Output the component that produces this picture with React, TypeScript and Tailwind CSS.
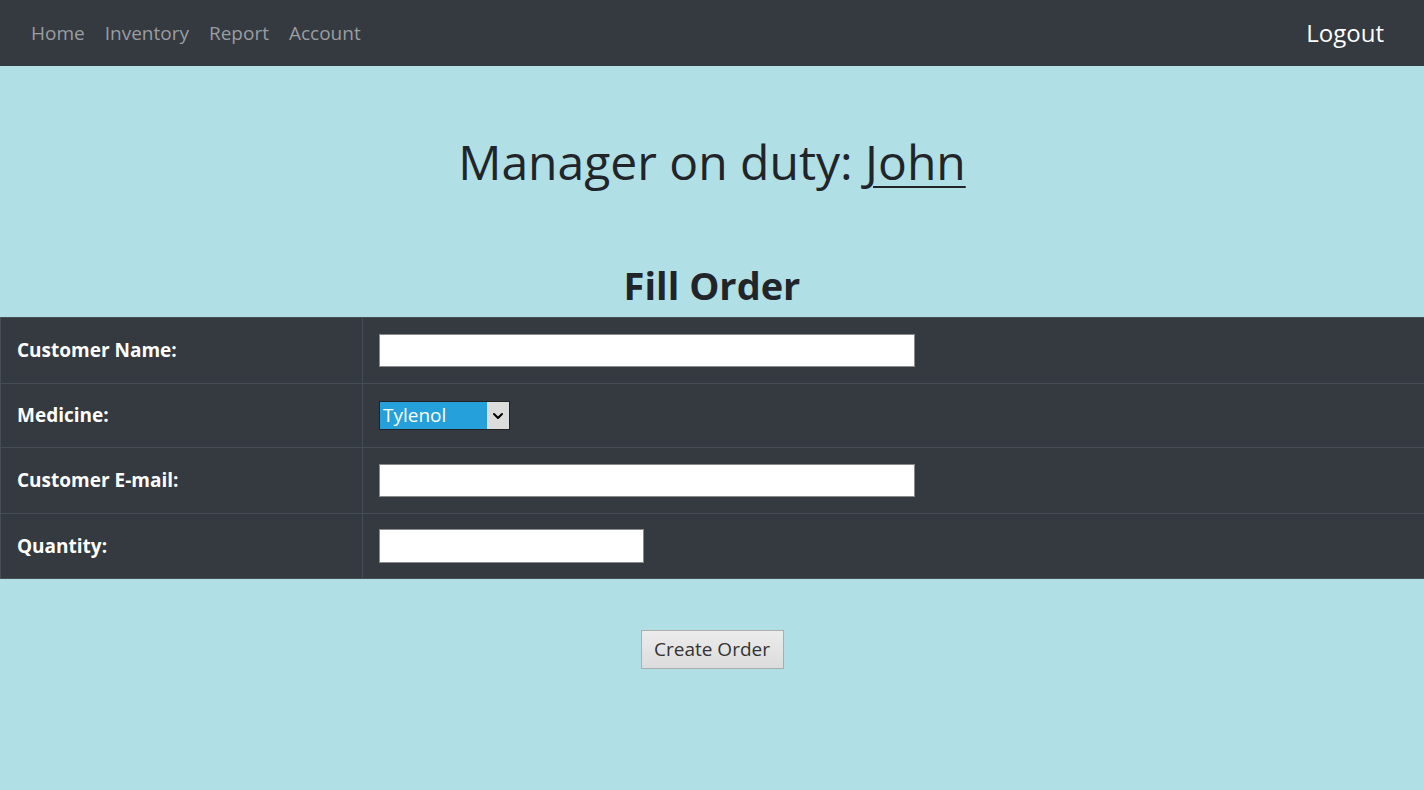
import { HiChevronDown } from "react-icons/hi";

const font = { fontFamily: '"Open Sans", "Noto Sans", sans-serif' };

const navLinks = ["Home", "Inventory", "Report", "Account"];

const Row = ({ label, h, children }: { label: string; h: string; children: React.ReactNode }) => (
  <div className={`grid grid-cols-[362px_1fr] border-t border-[#454d55] ${h}`}>
    <div className="flex items-center border-r border-[#454d55] pl-[16px] text-[19px] font-bold text-white">{label}</div>
    <div className="flex items-center pl-[16px]">{children}</div>
  </div>
);

export default function App() {
  return (
    <div className="min-h-[790px] bg-[#b0dfe5] text-[#212529]" style={font}>
      <nav className="flex h-[66px] items-center justify-between bg-[#343a40] pl-[21px] pr-[40px]">
        <div className="flex">
          {navLinks.map((l) => (
            <a key={l} href="#" className="px-[10px] text-[19px] text-[#9a9da0]">
              {l}
            </a>
          ))}
        </div>
        <a href="#" className="text-[24px] text-white">Logout</a>
      </nav>

      <h1 className="mt-[67px] text-center text-[48px] font-normal leading-[58px]">
        Manager on duty: <span className="underline decoration-[2px] underline-offset-[6px]">John</span>
      </h1>
      <h2 className="mt-[71px] text-center text-[38px] font-bold leading-[46px]">Fill Order</h2>

      <div className="mt-[9px] border-l border-b border-[#454d55] bg-[#343a40]">
        <Row label="Customer Name:" h="h-[66px]">
          <input className="h-[33px] w-[536px] border border-[#8a8a8a] bg-white outline-none" />
        </Row>
        <Row label="Medicine:" h="h-[64px]">
          <div className="flex h-[29px] w-[131px] border border-[#222] bg-white">
            <div className="flex flex-1 items-center bg-[#26a0da] pl-[3px] text-[19px] text-white">Tylenol</div>
            <div className="flex w-[22px] items-center justify-center bg-[#dcdcdc] text-black">
              <HiChevronDown size={20} />
            </div>
          </div>
        </Row>
        <Row label="Customer E-mail:" h="h-[66px]">
          <input className="h-[33px] w-[536px] border border-[#8a8a8a] bg-white outline-none" />
        </Row>
        <Row label="Quantity:" h="h-[65px]">
          <input className="h-[34px] w-[265px] border border-[#8a8a8a] bg-white outline-none" />
        </Row>
      </div>

      <div className="mt-[51px] flex justify-center">
        <button className="h-[39px] w-[143px] border border-[#adadad] bg-gradient-to-b from-[#ececec] to-[#dcdcdc] text-[19px] text-[#333]">
          Create Order
        </button>
      </div>
    </div>
  );
}
